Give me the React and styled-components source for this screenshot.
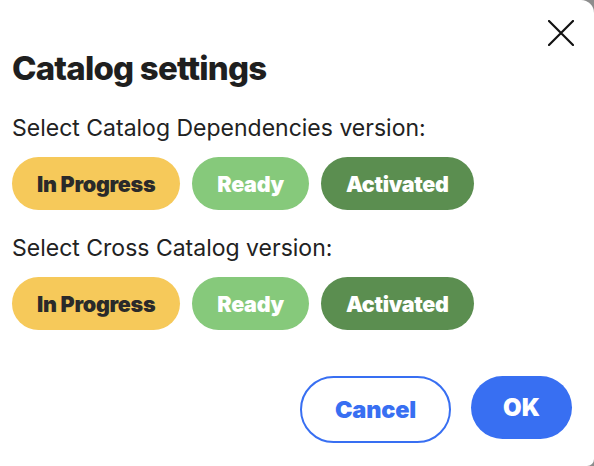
import React from "react";
import styled, { createGlobalStyle } from "styled-components";

const Global = createGlobalStyle`
  html, body { margin: 0; padding: 0; background: #8d8d8d; }
  body { font-family: Inter, "Noto Sans", sans-serif; }
`;

const Dialog = styled.div`
  box-sizing: border-box;
  width: 594px;
  height: 466px;
  background: #fff;
  border-radius: 0 13px 7px 0;
  color: #1f1f1f;
  display: flex;
  flex-direction: column;
  padding: 0 22px 0 12px;
  overflow: hidden;
`;

const Header = styled.div`
  display: flex;
  justify-content: flex-end;
  padding-top: 20px;
  margin-right: -2px;
  height: 26px;
`;

const CloseButton = styled.button`
  border: none;
  background: none;
  padding: 0;
  width: 26px;
  height: 26px;
  cursor: pointer;
  display: flex;
`;

const Title = styled.h1`
  margin: 2px 0 0;
  font-size: 33px;
  line-height: 40px;
  font-weight: 800;
  letter-spacing: -0.8px;
`;

const Label = styled.div`
  margin-top: ${(p) => p.$top}px;
  font-size: 23px;
  line-height: 28px;
  font-weight: 400;
  color: #222;
`;

const PillRow = styled.div`
  display: flex;
  gap: 12px;
  margin-top: 15px;
`;

const Pill = styled.button`
  height: 53px;
  padding: 0 25px;
  border: none;
  border-radius: 27px;
  font-family: Inter, sans-serif;
  font-size: 21.5px;
  font-weight: 900;
  letter-spacing: -0.3px;
  background: ${(p) => p.$bg};
  color: ${(p) => p.$fg};
  cursor: pointer;
`;

const Footer = styled.div`
  margin-top: auto;
  margin-bottom: 23px;
  display: flex;
  justify-content: flex-end;
  align-items: flex-start;
  gap: 20px;
`;

const CancelButton = styled.button`
  box-sizing: border-box;
  width: 151px;
  height: 67px;
  border: 2px solid #386ff2;
  border-radius: 34px;
  background: #fff;
  color: #386ff2;
  font-family: Inter, sans-serif;
  font-size: 23.5px;
  font-weight: 900;
  letter-spacing: -0.2px;
  cursor: pointer;
`;

const OkButton = styled.button`
  box-sizing: border-box;
  width: 101px;
  height: 63px;
  border: none;
  border-radius: 32px;
  background: #386ff2;
  color: #fff;
  font-family: Inter, sans-serif;
  font-size: 24px;
  font-weight: 900;
  cursor: pointer;
`;

const pills = [
  { label: "In Progress", bg: "#f6c95a", fg: "#2a2a2a" },
  { label: "Ready", bg: "#86c97b", fg: "#fff" },
  { label: "Activated", bg: "#5b8e50", fg: "#fff" },
];

function PillGroup() {
  return (
    <PillRow>
      {pills.map((p) => (
        <Pill key={p.label} $bg={p.bg} $fg={p.fg}>
          {p.label}
        </Pill>
      ))}
    </PillRow>
  );
}

export default function App() {
  return (
    <>
      <Global />
      <Dialog>
        <Header>
          <CloseButton aria-label="Close">
            <svg width="26" height="26" viewBox="0 0 26 26">
              <path d="M1 1L25 25M25 1L1 25" stroke="#111" strokeWidth="2.2" strokeLinecap="round" />
            </svg>
          </CloseButton>
        </Header>
        <Title>Catalog settings</Title>
        <Label $top={26}>Select Catalog Dependencies version:</Label>
        <PillGroup />
        <Label $top={24}>Select Cross Catalog version:</Label>
        <PillGroup />
        <Footer>
          <CancelButton>Cancel</CancelButton>
          <OkButton>OK</OkButton>
        </Footer>
      </Dialog>
    </>
  );
}
